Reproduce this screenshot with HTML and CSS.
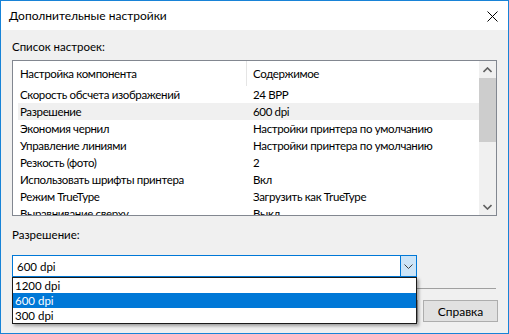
FILE: index.html
```html
<!DOCTYPE html>
<html lang="ru">
<head>
    <meta charset="UTF-8">
    <title>Дополнительные настройки</title>
    <link rel="stylesheet" href="styles.css">
</head>
<body>

<div class="window">
    <div class="titlebar">
        <span class="title">Дополнительные настройки</span>
        <svg class="close" width="11" height="11" viewBox="0 0 11 11">
            <path d="M0.5 0.5 L10.5 10.5 M10.5 0.5 L0.5 10.5" stroke="#000" stroke-width="1" fill="none"/>
        </svg>
    </div>

    <div class="content">
        <div class="label first">Список настроек:</div>

        <div class="list">
            <div class="list-body">
                <div class="list-head">
                    <div class="head-cell">Настройка компонента</div>
                    <div class="head-cell second">Содержимое</div>
                </div>
                <div class="row"><span>Скорость обсчета изображений</span><span>24 BPP</span></div>
                <div class="row selected"><span>Разрешение</span><span>600 dpi</span></div>
                <div class="row"><span>Экономия чернил</span><span>Настройки принтера по умолчанию</span></div>
                <div class="row"><span>Управление линиями</span><span>Настройки принтера по умолчанию</span></div>
                <div class="row"><span>Резкость (фото)</span><span>2</span></div>
                <div class="row"><span>Использовать шрифты принтера</span><span>Вкл</span></div>
                <div class="row"><span>Режим TrueType</span><span>Загрузить как TrueType</span></div>
                <div class="row"><span>Выравнивание сверху</span><span>Выкл</span></div>
            </div>
            <div class="scrollbar">
                <div class="arrow">
                    <svg width="9" height="6" viewBox="0 0 9 6"><path d="M0.5 5 L4.5 1 L8.5 5" stroke="#606060" stroke-width="1.6" fill="none"/></svg>
                </div>
                <div class="track"><div class="thumb"></div></div>
                <div class="arrow">
                    <svg width="9" height="6" viewBox="0 0 9 6"><path d="M0.5 1 L4.5 5 L8.5 1" stroke="#606060" stroke-width="1.6" fill="none"/></svg>
                </div>
            </div>
        </div>

        <div class="label second-label">Разрешение:</div>

        <div class="combo-wrap">
            <div class="combo">
                <span class="combo-value">600 dpi</span>
                <div class="combo-btn">
                    <svg width="9" height="5" viewBox="0 0 9 5"><path d="M0.5 0.5 L4.5 4.5 L8.5 0.5" stroke="#404040" stroke-width="1" fill="none"/></svg>
                </div>
            </div>
            <div class="dropdown">
                <div class="option">1200 dpi</div>
                <div class="option active">600 dpi</div>
                <div class="option">300 dpi</div>
            </div>
        </div>

        <div class="separator"></div>

        <div class="buttons">
            <button class="btn">Отмена</button>
            <button class="btn">Справка</button>
        </div>
    </div>
</div>

</body>
</html>
```

FILE: styles.css
```css
body {
    margin: 0;
    font-family: 'Lato', sans-serif;
    font-size: 11.5px;
    color: #000;
    background-color: #f0f0f0;
}
.window {
    width: 509px;
    height: 334px;
    box-sizing: border-box;
    border: 1px solid #1883d7;
    background-color: #f0f0f0;
}
.titlebar {
    height: 29px;
    background-color: #fff;
    display: flex;
    align-items: center;
    justify-content: space-between;
    padding: 0 10px 0 8px;
}
.title {
    font-size: 12px;
}
.close {
    margin-top: 1px;
}
.content {
    padding: 0 11px;
}
.label {
    height: 16px;
    line-height: 16px;
}
.label.first {
    margin-top: 9px;
    margin-bottom: 5px;
}
.list {
    height: 156px;
    box-sizing: border-box;
    border: 1px solid #828790;
    background-color: #fff;
    display: flex;
    overflow: hidden;
    letter-spacing: -0.35px;
}
.list-body {
    flex: 1;
    padding-left: 5px;
}
.list-head {
    height: 25px;
    display: flex;
    align-items: center;
}
.head-cell {
    width: 226px;
    padding-left: 2px;
    height: 25px;
    line-height: 25px;
    border-right: 1px solid #e5e5e5;
}
.head-cell.second {
    border-right: none;
    padding-left: 6px;
}
.row {
    height: 17px;
    line-height: 17px;
    display: grid;
    grid-template-columns: 235px 1fr;
    white-space: nowrap;
}
.row span:first-child {
    padding-left: 2px;
}
.row.selected {
    background-color: #f0f0f0;
}
.scrollbar {
    width: 17px;
    display: flex;
    flex-direction: column;
    background-color: #f0f0f0;
}
.arrow {
    height: 17px;
    display: flex;
    align-items: center;
    justify-content: center;
}
.track {
    flex: 1;
}
.thumb {
    height: 64px;
    background-color: #cdcdcd;
}
.second-label {
    margin-top: 11px;
}
.combo-wrap {
    position: relative;
    margin-top: 12px;
    width: 405px;
}
.combo {
    height: 22px;
    box-sizing: border-box;
    border: 1px solid #0078d7;
    background-color: #fff;
    display: flex;
    align-items: center;
}
.combo-value {
    flex: 1;
    padding-left: 4px;
}
.combo-btn {
    width: 15px;
    height: 20px;
    background-color: #cce4f7;
    border-left: 1px solid #0078d7;
    display: flex;
    align-items: center;
    justify-content: center;
}
.dropdown {
    position: absolute;
    left: 0;
    top: 22px;
    width: 405px;
    box-sizing: border-box;
    border: 1px solid #1a1a1a;
    background-color: #fff;
    box-shadow: 2px 2px 3px rgba(0, 0, 0, 0.35);
    z-index: 2;
}
.option {
    height: 15px;
    line-height: 15px;
    padding-left: 2px;
}
.option.active {
    background-color: #0078d7;
    color: #fff;
}
.separator {
    height: 1px;
    margin-top: 11px;
    margin-right: 1px;
    background-color: #a0a0a0;
}
.buttons {
    display: flex;
    justify-content: flex-end;
    gap: 5px;
    margin-top: 11px;
    margin-right: -1px;
}
.btn {
    width: 75px;
    height: 22px;
    font-family: 'Lato', sans-serif;
    font-size: 12px;
    background-color: #e1e1e1;
    border: 1px solid #adadad;
    padding: 0;
    color: #000;
}
```
